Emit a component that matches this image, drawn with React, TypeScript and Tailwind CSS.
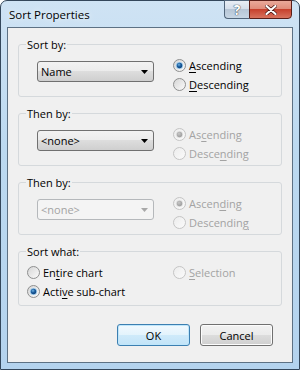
import React, { useId } from "react";

function Radio({ checked = false, disabled = false }: { checked?: boolean; disabled?: boolean }) {
  const id = useId().replace(/:/g, "");
  return (
    <svg width="13" height="13" viewBox="0 0 13 13" className="shrink-0">
      <defs>
        <linearGradient id={`f${id}`} x1="0" y1="0" x2="1" y2="1">
          <stop offset="0" stopColor={disabled ? "#ececec" : "#d4d4d4"} />
          <stop offset="1" stopColor={disabled ? "#fbfbfb" : "#fcfcfc"} />
        </linearGradient>
        <radialGradient id={`d${id}`} cx="0.4" cy="0.35" r="0.7">
          <stop offset="0" stopColor={disabled ? "#c8c8c8" : "#6fb3e3"} />
          <stop offset="0.5" stopColor={disabled ? "#b0b0b0" : "#1e5fa0"} />
          <stop offset="1" stopColor={disabled ? "#9c9c9c" : "#0b3f77"} />
        </radialGradient>
      </defs>
      <circle cx="6.5" cy="6.5" r="6" fill={`url(#f${id})`} stroke={disabled ? "#c4c4c4" : "#8e8f8f"} strokeWidth="1" />
      {checked && (
        <>
          <circle cx="6.5" cy="6.5" r="3.6" fill={disabled ? "#e2e2e2" : "#9cc9ea"} />
          <circle cx="6.5" cy="6.5" r="2.7" fill={`url(#d${id})`} />
        </>
      )}
    </svg>
  );
}

function Label({ text, u, disabled }: { text: string; u: number; disabled?: boolean }) {
  return (
    <span className={disabled ? "text-[#a3a3a3]" : "text-black"}>
      {text.slice(0, u)}
      <span className="underline underline-offset-[2px]">{text[u]}</span>
      {text.slice(u + 1)}
    </span>
  );
}

function RadioRow({
  text,
  u,
  checked,
  disabled,
}: {
  text: string;
  u: number;
  checked?: boolean;
  disabled?: boolean;
}) {
  return (
    <div className="flex h-[19px] items-center gap-[3px]">
      <Radio checked={checked} disabled={disabled} />
      <Label text={text} u={u} disabled={disabled} />
    </div>
  );
}

function Combo({ value, disabled }: { value: string; disabled?: boolean }) {
  return (
    <div
      className={
        "mt-[5px] ml-[18px] flex h-[21px] w-[117px] items-center justify-between rounded-[3px] border pl-[3px] pr-[5px] " +
        (disabled
          ? "border-[#b5b8bb] bg-[#f4f4f4] text-[#a3a3a3]"
          : "border-[#707070] bg-[linear-gradient(to_bottom,#f2f2f2_0%,#ebebeb_50%,#dddddd_50%,#cfcfcf_100%)] text-black")
      }
    >
      <span>{value}</span>
      <svg width="7" height="4" viewBox="0 0 7 4">
        <path d="M0 0 H7 L3.5 4 Z" fill={disabled ? "#a8a8a8" : "#000"} />
      </svg>
    </div>
  );
}

function Group({ title, children, pb = "pb-[2px]" }: { title: string; children: React.ReactNode; pb?: string }) {
  return (
    <fieldset className={"rounded-[3px] border border-[#d5d9dc] pt-[4px] " + pb}>
      <legend className="ml-[7px] px-[1px] leading-[15px] text-black">{title}</legend>
      {children}
    </fieldset>
  );
}

function SortGroup({
  title,
  value,
  comboDisabled,
  radiosDisabled,
  a,
  d,
}: {
  title: string;
  value: string;
  comboDisabled?: boolean;
  radiosDisabled?: boolean;
  a: number;
  d: number;
}) {
  return (
    <Group title={title}>
      <div className="flex">
        <Combo value={value} disabled={comboDisabled} />
        <div className="ml-[19px] flex flex-col">
          <RadioRow text="Ascending" u={a} checked disabled={radiosDisabled} />
          <RadioRow text="Descending" u={d} disabled={radiosDisabled} />
        </div>
      </div>
    </Group>
  );
}

function Btn({ children, primary }: { children: React.ReactNode; primary?: boolean }) {
  return (
    <div
      className={
        "flex h-[22px] w-[73px] items-center justify-center rounded-[3px] border " +
        (primary
          ? "border-[#3c7fb1] bg-[linear-gradient(to_bottom,#f1f9fe_0%,#e3f3fc_50%,#cfeafa_50%,#c2e4f8_100%)] shadow-[inset_0_0_0_1px_#bfe6fb]"
          : "border-[#707070] bg-[linear-gradient(to_bottom,#f2f2f2_0%,#ebebeb_50%,#dddddd_50%,#cfcfcf_100%)] shadow-[inset_0_0_0_1px_#fcfcfc]")
      }
    >
      {children}
    </div>
  );
}

export default function App() {
  return (
    <div className="h-[370px] w-[300px] bg-white font-['Open_Sans',sans-serif] text-[11px] leading-[15px]">
      <div className="flex h-[370px] w-[300px] flex-col rounded-t-[7px] border border-[#34475b] bg-[linear-gradient(to_bottom,#cfe3f4_0%,#bcd9f0_40%,#b4d3ee_100%)] px-[6px] pb-[6px]">
        <div className="flex h-[26px] shrink-0 items-start justify-between">
          <div className="pl-[2px] pt-[6px] text-[11.5px] text-black [text-shadow:0_0_6px_#ffffff]">Sort Properties</div>
          <div className="-mt-px mr-[1px] flex h-[19px]">
            <div className="flex w-[25px] items-center justify-center rounded-bl-[4px] border border-r-0 border-[#51657a] bg-[linear-gradient(to_bottom,#e8eef5_0%,#d3dde9_50%,#b7c6d6_50%,#c7d6e4_100%)] text-[14px] font-bold leading-none text-white [text-shadow:0_0_1px_#243446,0_0_1px_#243446]">
              ?
            </div>
            <div className="flex w-[43px] items-center justify-center rounded-br-[4px] border border-[#5a1e18] bg-[linear-gradient(to_bottom,#eaa99a_0%,#de8a78_50%,#c7412d_50%,#d8735e_100%)]">
              <svg width="12" height="10" viewBox="0 0 12 10">
                <path d="M1.5 1 L10.5 9 M10.5 1 L1.5 9" stroke="#4a1510" strokeWidth="3.6" strokeLinecap="round" />
                <path d="M1.5 1 L10.5 9 M10.5 1 L1.5 9" stroke="#ffffff" strokeWidth="2.2" strokeLinecap="round" />
              </svg>
            </div>
          </div>
        </div>
        <div className="flex flex-1 flex-col border border-[#5d7184] bg-[#f0f0f0] px-[10px] pt-[9px]">
          <div className="flex flex-col gap-[9px]">
            <SortGroup title="Sort by:" value="Name" a={0} d={0} />
            <SortGroup title="Then by:" value="<none>" radiosDisabled a={2} d={5} />
            <SortGroup title="Then by:" value="<none>" comboDisabled radiosDisabled a={5} d={9} />
            <Group title="Sort what:" pb="pb-[4px]">
              <div className="grid grid-cols-[146px_1fr] pl-[8px]">
                <RadioRow text="Entire chart" u={2} />
                <RadioRow text="Selection" u={0} disabled />
                <RadioRow text="Active sub-chart" u={4} checked />
              </div>
            </Group>
          </div>
          <div className="mt-[18px] flex justify-end gap-[10px] pr-[9px]">
            <Btn primary>OK</Btn>
            <Btn>Cancel</Btn>
          </div>
        </div>
      </div>
    </div>
  );
}
